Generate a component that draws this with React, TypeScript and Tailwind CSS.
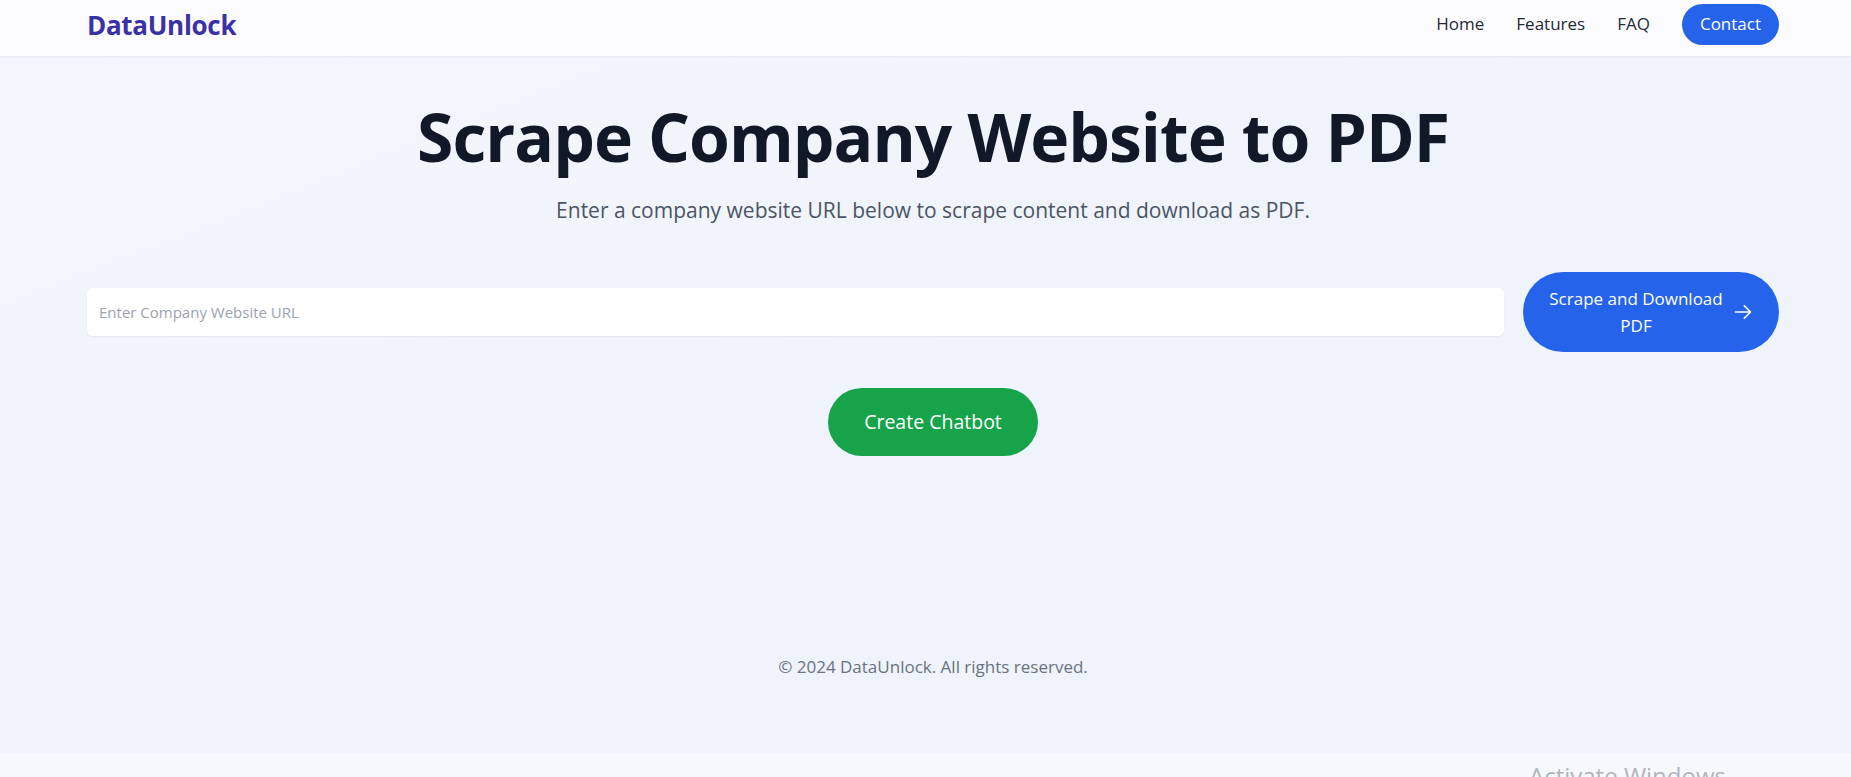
import React from 'react';

const font = { fontFamily: '"Open Sans", "Noto Sans", Arial, sans-serif' };

const Header: React.FC = () => (
  <header className="h-14 bg-[#fcfcfe] shadow-[0_1px_2px_rgba(0,0,0,0.06)] pl-[87px] pr-[72px] pb-2 flex items-center justify-between">
    <div className="text-[26px] font-bold text-[#3a31a6] tracking-[-0.3px] pt-[3px]">DataUnlock</div>
    <nav className="flex items-center gap-8 text-[17px] text-[#1f2937]">
      <a href="#">Home</a>
      <a href="#">Features</a>
      <a href="#">FAQ</a>
      <a href="#" className="bg-[#2563eb] text-white rounded-full px-[18px] h-[41px] flex items-center">Contact</a>
    </nav>
  </header>
);

export default function App() {
  return (
    <div className="relative h-[777px] overflow-hidden bg-[#f5f8fc]" style={font}>
      <div className="h-[753px] flex flex-col bg-linear-to-br from-[#f4f6fc] via-[#eff3fb] to-[#eff4fb]">
        <Header />

        <main className="flex-1 flex flex-col items-center pl-[87px] pr-[72px]">
          <h1 className="mt-[39px] text-[66px] leading-[1.25] font-bold text-[#111827] tracking-[-1px]">
            Scrape Company Website to PDF
          </h1>
          <p className="mt-[17px] text-[21px] text-[#4b5563]">
            Enter a company website URL below to scrape content and download as PDF.
          </p>

          <div className="mt-[46px] w-full flex items-center gap-[19px]">
            <input
              type="text"
              placeholder="Enter Company Website URL"
              className="flex-1 h-12 bg-white rounded-md px-3 text-[15px] shadow-[0_1px_2px_rgba(0,0,0,0.06)] placeholder:text-[#9ca3af] outline-none"
            />
            <button className="w-[256px] h-20 rounded-full bg-[#2563eb] text-white flex items-center justify-center gap-[6px] pr-[4px] text-[17px] leading-[27px]">
              <span className="w-[182px] text-center">Scrape and Download PDF</span>
              <svg viewBox="0 0 24 24" fill="none" stroke="currentColor" strokeWidth={2} strokeLinecap="round" strokeLinejoin="round" className="w-5 h-5">
                <path d="M13.5 4.5 21 12m0 0-7.5 7.5M21 12H3" />
              </svg>
            </button>
          </div>

          <button className="mt-9 h-[68px] px-9 rounded-full bg-[#16a34a] text-white text-[19.5px]">
            Create Chatbot
          </button>

          <footer className="mt-auto mb-[74px] text-[17px] text-[#6b7280]">
            © 2024 DataUnlock. All rights reserved.
          </footer>
        </main>
      </div>

      <span className="absolute left-[1529px] top-[758px] text-[24px] text-[#9ca3af]/80 whitespace-nowrap">
        Activate Windows
      </span>
    </div>
  );
}
